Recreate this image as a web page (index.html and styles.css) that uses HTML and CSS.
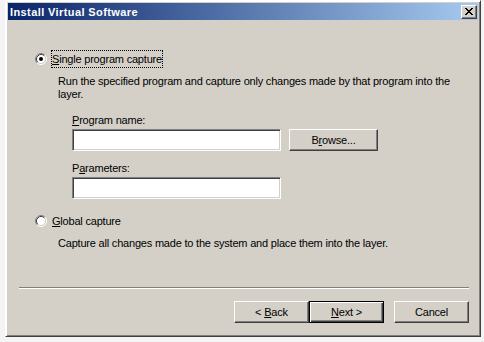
FILE: index.html
```html
<!doctype html>
<html lang="en">
<head>
  <meta charset="UTF-8" />
  <title>Install Virtual Software</title>
  <link rel="stylesheet" href="styles.css">
</head>
<body>
  <!-- Dialog window -->
  <div class="window">
    <div class="titlebar">
      <span class="title">Install Virtual Software</span>
      <button class="close-btn" aria-label="Close">
        <svg width="8" height="7" viewBox="0 0 8 7" shape-rendering="crispEdges">
          <path fill="#000" d="M0 0h2v1h-2z M6 0h2v1h-2z M1 1h2v1h-2z M5 1h2v1h-2z M2 2h4v1h-4z M3 3h2v1h-2z M2 4h4v1h-4z M1 5h2v1h-2z M5 5h2v1h-2z M0 6h2v1h-2z M6 6h2v1h-2z"/>
        </svg>
      </button>
    </div>

    <div class="content">
      <div class="option">
        <span class="radio">
          <svg width="12" height="12" viewBox="0 0 12 12">
            <circle cx="6" cy="6" r="4.5" fill="#fff"/>
            <path d="M2.11 9.89 A5.5 5.5 0 0 1 9.89 2.11" fill="none" stroke="#808080"/>
            <path d="M9.89 2.11 A5.5 5.5 0 0 1 2.11 9.89" fill="none" stroke="#fff"/>
            <path d="M2.82 9.18 A4.5 4.5 0 0 1 9.18 2.82" fill="none" stroke="#404040"/>
            <path d="M9.18 2.82 A4.5 4.5 0 0 1 2.82 9.18" fill="none" stroke="#d4d0c8"/>
            <circle cx="6" cy="6" r="2" fill="#000"/>
          </svg>
        </span>
        <span class="option-label focused"><u>S</u>ingle program capture</span>
      </div>
      <p class="desc">Run the specified program and capture only changes made by that program into the layer.</p>

      <div class="field">
        <label class="field-label"><u>P</u>rogram name:</label>
        <div class="field-row">
          <div class="textbox"></div>
          <button class="btn browse-btn">B<u>r</u>owse...</button>
        </div>
      </div>
      <div class="field">
        <label class="field-label">P<u>a</u>rameters:</label>
        <div class="field-row">
          <div class="textbox"></div>
        </div>
      </div>

      <div class="option option-second">
        <span class="radio">
          <svg width="12" height="12" viewBox="0 0 12 12">
            <circle cx="6" cy="6" r="4.5" fill="#fff"/>
            <path d="M2.11 9.89 A5.5 5.5 0 0 1 9.89 2.11" fill="none" stroke="#808080"/>
            <path d="M9.89 2.11 A5.5 5.5 0 0 1 2.11 9.89" fill="none" stroke="#fff"/>
            <path d="M2.82 9.18 A4.5 4.5 0 0 1 9.18 2.82" fill="none" stroke="#404040"/>
            <path d="M9.18 2.82 A4.5 4.5 0 0 1 2.82 9.18" fill="none" stroke="#d4d0c8"/>
          </svg>
        </span>
        <span class="option-label"><u>G</u>lobal capture</span>
      </div>
      <p class="desc">Capture all changes made to the system and place them into the layer.</p>
    </div>

    <div class="footer">
      <div class="separator"></div>
      <div class="buttons">
        <button class="btn">&lt; <u>B</u>ack</button>
        <button class="btn btn-default"><u>N</u>ext &gt;</button>
        <button class="btn btn-cancel">Cancel</button>
      </div>
    </div>
  </div>
</body>
</html>
```

FILE: styles.css
```css
/* ---------- Globals ---------- */
* {
  box-sizing: border-box;
}
body {
  margin: 0;
  background: #f4f4f4;
  font-family: 'Liberation Sans', Arial, sans-serif;
  font-size: 11px;
  letter-spacing: -0.2px;
  color: #000;
}
u {
  text-decoration: underline;
}

/* ---------- Window frame ---------- */
.window {
  margin-left: 5px;
  width: 476px;
  height: 337px;
  display: flex;
  flex-direction: column;
  background: #d4d0c8;
  border: 1px solid;
  border-color: #fff #404040 #404040 #fff;
  box-shadow: inset 1px 1px #fff, inset -1px -1px #808080;
  padding: 2px;
}
.titlebar {
  height: 17px;
  display: flex;
  align-items: center;
  justify-content: space-between;
  padding: 0 1px 0 2px;
  background: linear-gradient(to right, #0a246a, #a6caf0);
}
.title {
  color: #fff;
  font-weight: bold;
  font-size: 11px;
  letter-spacing: 0.4px;
}
.close-btn {
  width: 16px;
  height: 14px;
  padding: 0;
  display: flex;
  align-items: center;
  justify-content: center;
  background: #d4d0c8;
  border: 1px solid;
  border-color: #fff #404040 #404040 #fff;
  box-shadow: inset -1px -1px #808080;
}

/* ---------- Content ---------- */
.content {
  flex: 1;
  padding: 30px 0 0 27px;
}
.option {
  display: flex;
  align-items: center;
  height: 18px;
}
.option-second {
  margin-top: 13px;
}
.radio {
  width: 12px;
  height: 12px;
  margin-right: 4px;
  display: flex;
}
.option-label {
  line-height: 16px;
  border: 1px solid transparent;
}
.option-label.focused {
  border: 1px dotted #000;
}
.desc {
  margin: 7px 0 0 23px;
  width: 410px;
  line-height: 13px;
}
.field {
  margin: 13px 0 0 37px;
}
.field + .field {
  margin-top: 11px;
}
.field-label {
  display: block;
  line-height: 13px;
  margin-bottom: 2px;
}
.field-row {
  display: flex;
  gap: 8px;
}
.textbox {
  width: 209px;
  height: 22px;
  background: #fff;
  border: 1px solid;
  border-color: #808080 #fff #fff #808080;
  box-shadow: inset 1px 1px #404040, inset -1px -1px #d4d0c8;
}

/* ---------- Buttons ---------- */
.btn {
  width: 75px;
  height: 22px;
  padding: 0;
  font-family: inherit;
  font-size: 11px;
  letter-spacing: inherit;
  color: #000;
  background: #d4d0c8;
  border: 1px solid;
  border-color: #fff #404040 #404040 #fff;
  box-shadow: inset -1px -1px #808080;
}
.browse-btn {
  width: 89px;
}
.btn-default {
  border: 1px solid #000;
  box-shadow: inset 1px 1px #fff, inset -1px -1px #404040, inset -2px -2px #808080;
}
.btn-cancel {
  margin-left: 10px;
}

/* ---------- Footer ---------- */
.footer {
  padding: 0 9px 11px 11px;
}
.separator {
  height: 2px;
  border-top: 1px solid #808080;
  border-bottom: 1px solid #fff;
}
.buttons {
  display: flex;
  justify-content: flex-end;
  margin-top: 12px;
}
```
